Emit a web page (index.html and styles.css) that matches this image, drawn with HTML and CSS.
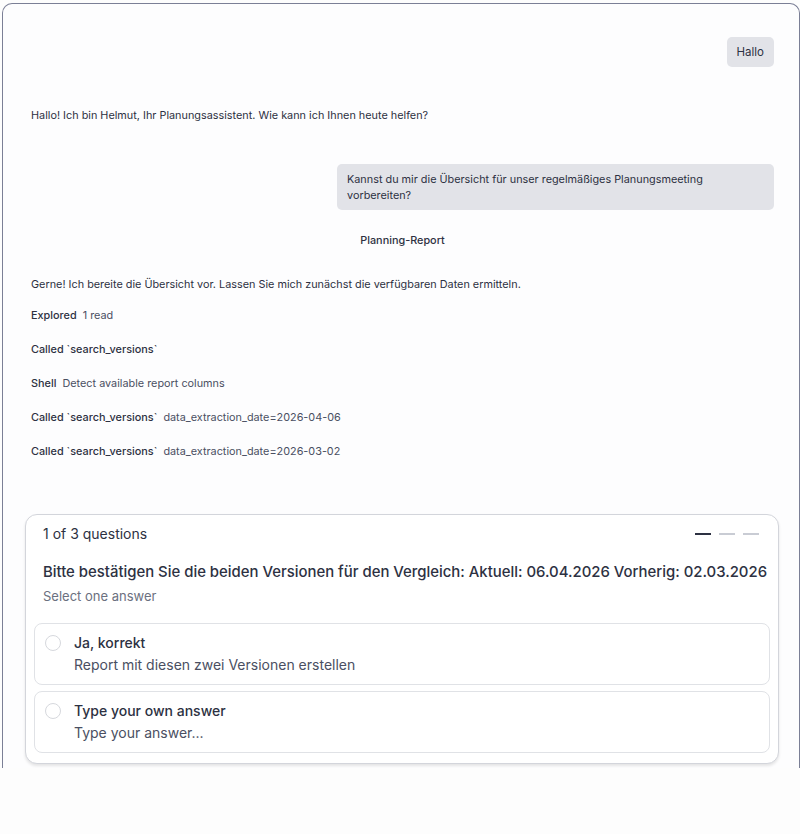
FILE: index.html
```html
<!DOCTYPE html>
<html lang="de">
<head>
  <meta charset="UTF-8">
  <title>Helmut – Planungsassistent</title>
  <link rel="stylesheet" href="styles.css">
</head>
<body>
  <div class="frame">
    <div class="chat">
      <div class="msg-user short">Hallo</div>

      <p class="msg-bot greeting">Hallo! Ich bin Helmut, Ihr Planungsassistent. Wie kann ich Ihnen heute helfen?</p>

      <div class="msg-user long">Kannst du mir die Übersicht für unser regelmäßiges Planungsmeeting vorbereiten?</div>

      <div class="skill">Planning-Report</div>

      <p class="msg-bot reply">Gerne! Ich bereite die Übersicht vor. Lassen Sie mich zunächst die verfügbaren Daten ermitteln.</p>

      <div class="step first"><b>Explored</b> 1 read</div>
      <div class="step"><b>Called `search_versions`</b></div>
      <div class="step"><b>Shell</b> Detect available report columns</div>
      <div class="step"><b>Called `search_versions`</b> data_extraction_date=2026-04-06</div>
      <div class="step"><b>Called `search_versions`</b> data_extraction_date=2026-03-02</div>

      <div class="question">
        <div class="q-head">
          <span>1 of 3 questions</span>
          <div class="q-steps">
            <i class="on"></i><i></i><i></i>
          </div>
        </div>
        <div class="q-text">Bitte bestätigen Sie die beiden Versionen für den Vergleich: Aktuell: 06.04.2026 Vorherig: 02.03.2026</div>
        <div class="q-hint">Select one answer</div>

        <div class="option">
          <span class="radio"></span>
          <div>
            <div class="opt-title">Ja, korrekt</div>
            <div class="opt-desc">Report mit diesen zwei Versionen erstellen</div>
          </div>
        </div>
        <div class="option">
          <span class="radio"></span>
          <div>
            <div class="opt-title">Type your own answer</div>
            <div class="opt-desc">Type your answer...</div>
          </div>
        </div>
      </div>
    </div>
  </div>
</body>
</html>
```

FILE: styles.css
```css
body {
  margin: 0;
  background: #fdfdfd;
  font-family: Inter, "Noto Sans", sans-serif;
  color: #2d3142;
}
.frame {
  margin: 3px 0 0 2px;
  height: 764px;
  border: 1.5px solid #7b7f96;
  border-bottom: none;
  border-radius: 10px 10px 0 0;
  background: #fdfdfe;
  overflow: hidden;
}
.chat {
  display: flex;
  flex-direction: column;
  padding: 33px 25px 0 28px;
  font-size: 10.85px;
  line-height: 16px;
}
.msg-user {
  align-self: flex-end;
  background: #e2e3e8;
  border-radius: 5px;
  color: #2d3142;
}
.msg-user.short {
  padding: 7px 10px;
  font-size: 11.5px;
}
.msg-user.long {
  width: 417px;
  margin-top: 41px;
  padding: 7px 10px;
}
.msg-bot {
  margin: 0;
}
.greeting {
  margin-top: 40px;
}
.skill {
  align-self: center;
  margin-top: 22px;
  font-weight: 500;
}
.reply {
  margin-top: 28px;
}
.step {
  margin-top: 18px;
  color: #4a4f62;
}
.step.first {
  margin-top: 15px;
}
.step b {
  font-weight: 500;
  color: #2d3142;
  margin-right: 3px;
}

.question {
  margin: 55px -5px 0 -6px;
  background: #fff;
  border: 1px solid #d3d5db;
  border-radius: 12px;
  box-shadow: 0 2px 3px rgba(0, 0, 0, 0.1);
  padding: 9px 8px 10px 8px;
}
.q-head {
  display: flex;
  justify-content: space-between;
  align-items: center;
  padding: 0 11px 0 9px;
  font-size: 14px;
  line-height: 20px;
}
.q-steps {
  display: flex;
  gap: 8px;
}
.q-steps i {
  display: block;
  width: 16px;
  height: 2px;
  background: #c9ccd4;
}
.q-steps i.on {
  background: #2d3142;
}
.q-text {
  margin-top: 18px;
  padding: 0 9px;
  font-size: 14.9px;
  line-height: 20px;
  font-weight: 500;
  white-space: nowrap;
}
.q-hint {
  padding: 0 9px;
  margin-top: 5px;
  font-size: 13px;
  line-height: 18px;
  color: #6b7080;
}
.option {
  display: flex;
  gap: 13px;
  margin-top: 18px;
  height: 62px;
  box-sizing: border-box;
  padding: 8px 10px;
  border: 1px solid #e0e2e6;
  border-radius: 8px;
  font-size: 14px;
  line-height: 22px;
}
.option + .option {
  margin-top: 6px;
}
.radio {
  width: 14px;
  height: 14px;
  margin-top: 3px;
  border: 1px solid #d6d8dd;
  border-radius: 50%;
  flex-shrink: 0;
}
.opt-title {
  font-weight: 500;
}
.opt-desc {
  color: #4a4f62;
}
```
